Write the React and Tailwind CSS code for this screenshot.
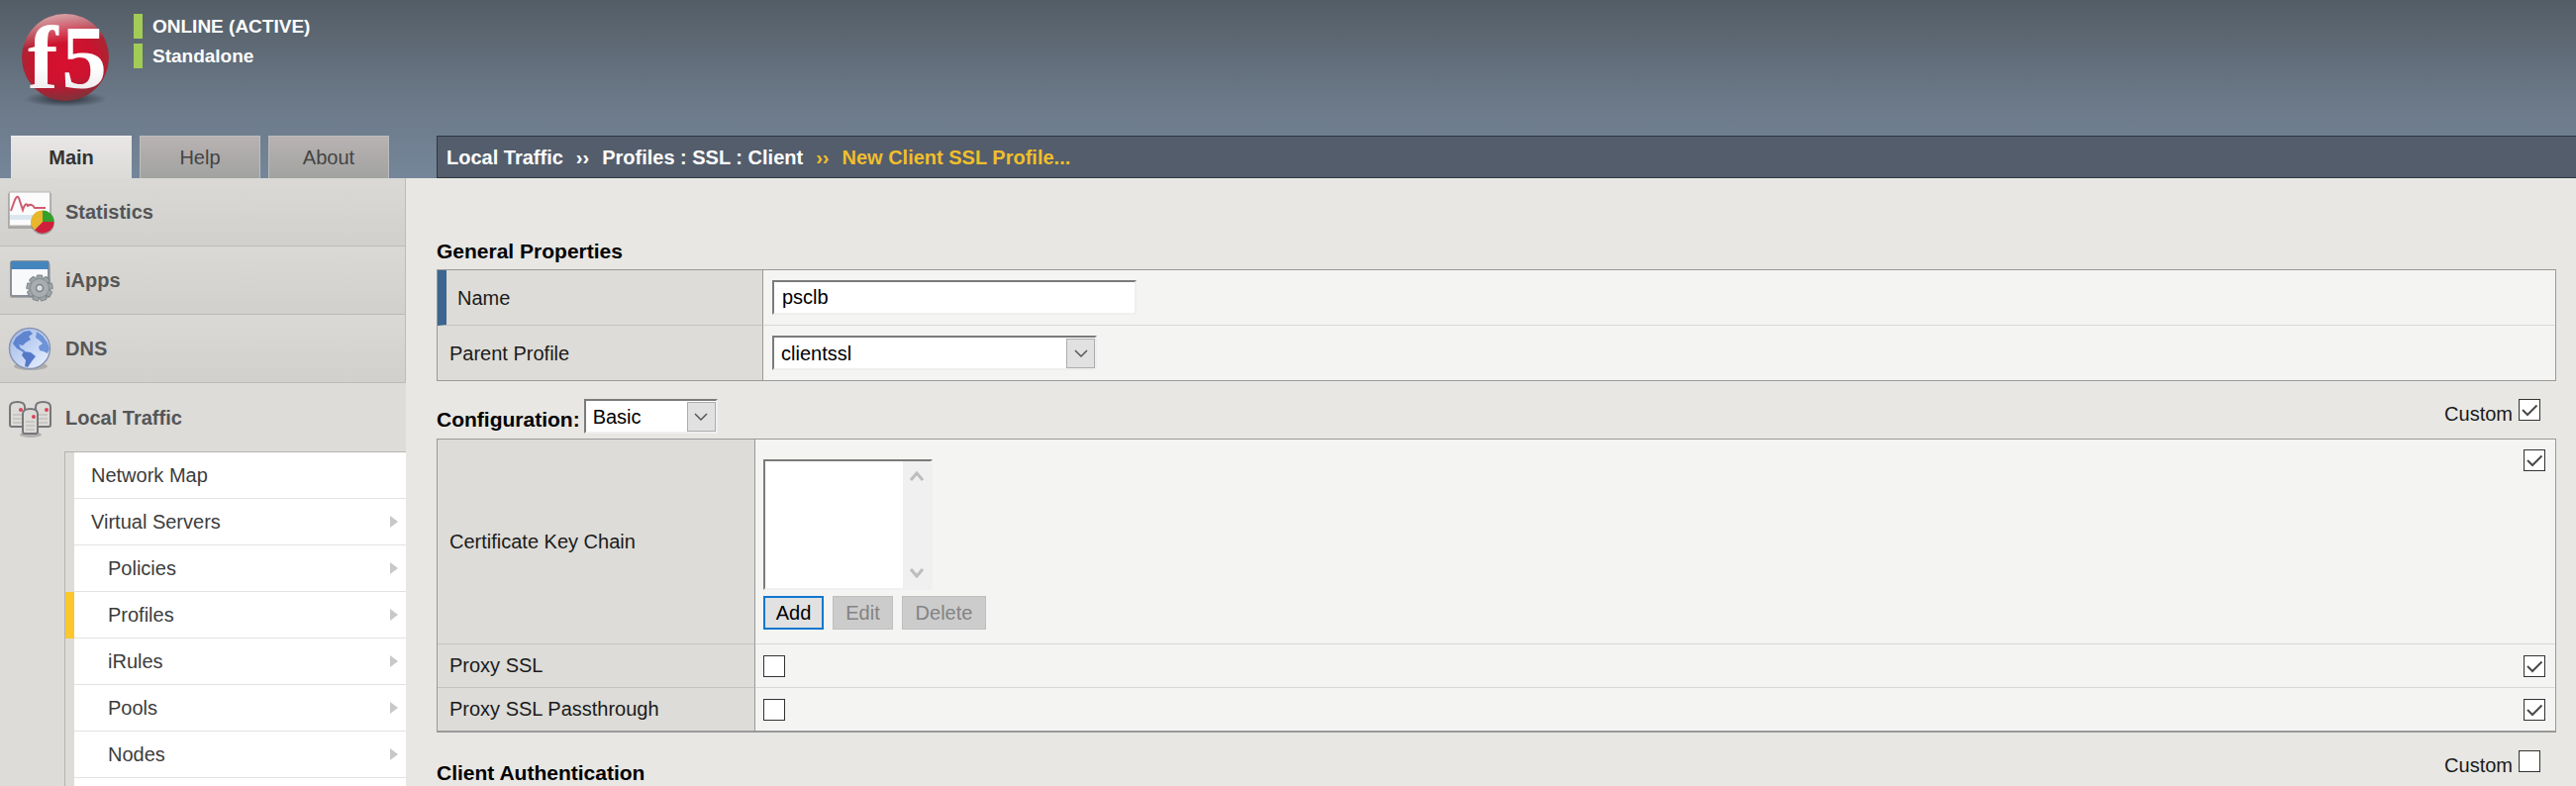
import { useState } from 'react'

const TABS = ['Main', 'Help', 'About']

const SUBMENU = [
  { label: 'Network Map' },
  { label: 'Virtual Servers', more: true },
  { label: 'Policies', more: true, nested: true },
  { label: 'Profiles', more: true, nested: true, active: true },
  { label: 'iRules', more: true, nested: true },
  { label: 'Pools', more: true, nested: true },
  { label: 'Nodes', more: true, nested: true },
]

function Logo() {
  return (
    <svg className="overflow-visible" width="100" height="100" viewBox="0 0 100 100" role="img" aria-label="f5">
      <defs>
        <radialGradient id="ball" cx="0.5" cy="0.55" r="0.55">
          <stop offset="0" stopColor="#d8102f" />
          <stop offset="0.65" stopColor="#c8142f" />
          <stop offset="1" stopColor="#a12a35" />
        </radialGradient>
        <linearGradient id="shine" x1="0.35" y1="0" x2="0.5" y2="1">
          <stop offset="0" stopColor="#fff" stopOpacity="0.6" />
          <stop offset="0.35" stopColor="#fff" stopOpacity="0" />
          <stop offset="0.75" stopColor="#5a4040" stopOpacity="0" />
          <stop offset="1" stopColor="#5a4040" stopOpacity="0.6" />
        </linearGradient>
        <radialGradient id="floor">
          <stop offset="0" stopColor="#1c242c" stopOpacity="0.9" />
          <stop offset="1" stopColor="#1c242c" stopOpacity="0" />
        </radialGradient>
        <linearGradient id="ink" x1="0" y1="0" x2="0" y2="1">
          <stop offset="0" stopColor="#fff" />
          <stop offset="0.6" stopColor="#fff" />
          <stop offset="1" stopColor="#e2dcdf" />
        </linearGradient>
      </defs>
      <ellipse cx="50" cy="86" rx="42" ry="8" fill="url(#floor)" />
      <circle cx="50" cy="44" r="44" fill="url(#ball)" />
      <circle cx="50" cy="44" r="44" fill="url(#shine)" />
      <text x="12" y="75" fontFamily="Liberation Serif, serif" fontWeight="700" fontSize="92" fill="url(#ink)">f</text>
      <text x="46" y="75" fontFamily="Liberation Serif, serif" fontWeight="700" fontSize="92" fill="url(#ink)">5</text>
    </svg>
  )
}

function StatisticsIcon() {
  return (
    <svg width="48" height="46" viewBox="0 0 48 46" aria-hidden="true">
      <rect x="0" y="4" width="44" height="36" rx="1" fill="#000" opacity="0.2" />
      <rect x="1.500" y="3" width="41" height="34" fill="#fbfbfb" stroke="#b5b5b5" />
      <path d="M2 26h40v5H2z" fill="#dbe7ef" />
      <path d="M3 22L7 11q3-7 5 1l3 9q3-9 5-4 4-3 7 2h11" fill="none" stroke="#cf5c70" strokeWidth="2" />
      <circle cx="35" cy="34" r="12" fill="#3a3a3a" opacity="0.35" />
      <path d="M35 33V21.500a11.500 11.500 0 0 1 11.500 11.500z" fill="#35a02b" />
      <path d="M35 33h11.500a11.500 11.500 0 0 1-19.500 8.300z" fill="#cf1f3c" />
      <path d="M35 33l-8 8.300a11.500 11.500 0 0 1 8-19.800z" fill="#e9b62c" />
    </svg>
  )
}

function AppsIcon() {
  return (
    <svg width="48" height="46" viewBox="0 0 48 46" aria-hidden="true">
      <rect x="2" y="6" width="41" height="35" rx="2" fill="#000" opacity="0.2" />
      <rect x="3" y="4" width="38" height="35" rx="2" fill="#f8f9fb" stroke="#8a9099" strokeWidth="2" />
      <path d="M3 4h38v8H3z" fill="#4585bd" />
      <g fill="#9da5a9" stroke="#7b8386" strokeWidth="1">
        {[0, 40, 80, 120, 160, 200, 240, 280, 320].map((a) => (
          <rect key={a} x="29" y="18" width="6" height="7" rx="1" transform={`rotate(${a} 32 31)`} />
        ))}
      </g>
      <circle cx="32" cy="31" r="9.500" fill="#a6aeb2" stroke="#868e92" />
      <circle cx="32" cy="31" r="3.500" fill="#dde1e3" stroke="#7b8386" strokeWidth="1.500" />
    </svg>
  )
}

function DnsIcon() {
  return (
    <svg width="48" height="46" viewBox="0 0 48 46" aria-hidden="true">
      <defs>
        <linearGradient id="sea" x1="0" y1="0" x2="1" y2="1">
          <stop offset="0" stopColor="#9fb6e4" />
          <stop offset="0.5" stopColor="#c3d4f4" />
          <stop offset="1" stopColor="#eef3fd" />
        </linearGradient>
      </defs>
      <ellipse cx="23" cy="41" rx="17" ry="4" fill="#000" opacity="0.18" />
      <circle cx="22" cy="23" r="20.500" fill="url(#sea)" stroke="#8794b4" strokeWidth="1.500" />
      <path d="M8 12l8-6 6-1 3 3-4 3 2 3-5 3-3 3-4-1 2 4 4 2-1 2-7-4-4-5z" fill="#5f85cf" />
      <path d="M16 26l7 1 5 4-4 5-4 6-3-1 1-6-4-5z" fill="#5579c8" />
      <path d="M29 6l6 4 5 7 2 6-2 5-4-2-4-1-1-4 4-3-3-3-4-3z" fill="#6f93d8" />
    </svg>
  )
}

function Server({ x, y }) {
  return (
    <g transform={`translate(${x} ${y})`}>
      <path d="M0 6q0-5 7.500-5T15 6v18q0 2-2 2H2q-2 0-2-2z" fill="#dcdbd8" stroke="#77767a" strokeWidth="2" />
      <path d="M3 14h9M3 18h9M3 22h9" stroke="#b4b3b0" />
      <circle cx="11" cy="9" r="2" fill="#d8455b" />
    </g>
  )
}

function TrafficIcon() {
  return (
    <svg width="48" height="46" viewBox="0 0 48 46" aria-hidden="true">
      <ellipse cx="23" cy="40" rx="11" ry="3" fill="#000" opacity="0.2" />
      <Server x={2} y={6} />
      <Server x={28} y={6} />
      <Server x={15} y={13} />
    </svg>
  )
}

const SECTIONS = [
  { label: 'Statistics', icon: StatisticsIcon },
  { label: 'iApps', icon: AppsIcon },
  { label: 'DNS', icon: DnsIcon },
]

function Check({ label, id, defaultChecked = false }) {
  return (
    <span className="relative block size-[22px] shrink-0">
      <input
        id={id}
        type="checkbox"
        aria-label={label}
        defaultChecked={defaultChecked}
        className="peer block size-[22px] appearance-none border border-[#333] bg-white"
      />
      <svg className="pointer-events-none absolute inset-0 hidden peer-checked:block" width="22" height="22" viewBox="0 0 22 22" fill="none" stroke="#4a4a4a" strokeWidth="2" aria-hidden="true">
        <path d="M4 11l5 5L18.500 6.500" />
      </svg>
    </span>
  )
}

function Dropdown({ id, label, options, className }) {
  return (
    <span className={`relative block h-[35px] ${className}`}>
      <select
        id={id}
        aria-label={label}
        className="block h-full w-full appearance-none border-2 border-t-[#7b7b7b] border-r-[#efefef] border-b-[#efefef] border-l-[#7b7b7b] bg-white pl-[7px] text-black"
      >
        {options.map((o) => <option key={o}>{o}</option>)}
      </select>
      <span className="pointer-events-none absolute top-[3px] right-[2px] bottom-[2px] flex w-[29px] items-center justify-center border border-[#adadad] bg-[#e1e1e1]">
        <svg width="14" height="9" viewBox="0 0 14 9" fill="none" stroke="#555" strokeWidth="1.500" aria-hidden="true">
          <path d="M1 1l6 6 6-6" />
        </svg>
      </span>
    </span>
  )
}

function CustomToggle({ id, defaultChecked }) {
  return (
    <div className="flex items-start gap-[6px] pr-4">
      <label htmlFor={id} className="pt-[3px] leading-6">Custom</label>
      <Check id={id} defaultChecked={defaultChecked} />
    </div>
  )
}

export default function App() {
  const [tab, setTab] = useState('Main')

  return (
    <div className="flex min-h-screen flex-col bg-[#e8e7e3] font-['Liberation_Sans',Arial,sans-serif] text-[20px] leading-6 text-[#1a1a1a]">
      <header className="bg-linear-to-b from-[#535d66] via-[#6b7887] via-55% to-[#75869a]">
        <div className="flex h-[137px] items-start gap-[19px] pt-[14px] pl-4">
          <Logo />
          <div className="flex flex-col gap-[5px] text-[19px] font-bold text-white">
            <p className="h-[25px] border-l-[9px] border-[#a2cc56] pl-[10px] leading-[25px]">ONLINE (ACTIVE)</p>
            <p className="h-[25px] border-l-[9px] border-[#a2cc56] pl-[10px] leading-[25px]">Standalone</p>
          </div>
        </div>
        <div className="flex h-[43px]">
          <div className="flex w-[410px] shrink-0 gap-2 pl-[11px]">
            {TABS.map((t) => (
              <button
                key={t}
                type="button"
                onClick={() => setTab(t)}
                className={t === tab
                  ? 'w-[122px] border-t border-[#f2f0f0] bg-linear-to-b from-[#e9e6e6] to-[#dcdbd7] font-bold text-[#333]'
                  : 'w-[122px] border border-b-0 border-[#bdbdbd] bg-linear-to-b from-[#b8b2b3] to-[#a1a3a0] text-[#444]'}
              >
                {t}
              </button>
            ))}
          </div>
          <nav aria-label="Breadcrumb" className="ml-[31px] flex flex-1 items-center gap-[13px] border border-r-0 border-[#2f3640] bg-[#545d6b] pl-[9px] font-bold text-white">
            <a href="#local-traffic">Local Traffic</a>
            <span>››</span>
            <a href="#profiles">Profiles : SSL : Client</a>
            <span className="text-[#f0bf2b]">››</span>
            <span className="text-[#f0bf2b]">New Client SSL Profile...</span>
          </nav>
        </div>
      </header>

      <div className="flex flex-1">
        <aside className="flex w-[410px] shrink-0 flex-col bg-[#dddcd9]">
          {SECTIONS.map(({ label, icon: Icon }) => (
            <a
              key={label}
              href={`#${label.toLowerCase()}`}
              className="flex h-[69px] items-center gap-[10px] border-r border-b border-[#bcbbb8] bg-linear-to-b from-[#dad9d6] to-[#d1d0cc] pl-2 font-bold text-[#555]"
            >
              <Icon />
              {label}
            </a>
          ))}
          <a href="#local-traffic" className="flex h-[69px] items-center gap-[10px] pl-2 font-bold text-[#555]">
            <TrafficIcon />
            Local Traffic
          </a>
          <ul className="ml-[65px] flex flex-1 flex-col border-t border-l border-[#b5b4b1] text-[#3c3c3c]">
            {SUBMENU.map((item) => (
              <li key={item.label} className={`border-l-[9px] ${item.active ? 'border-[#fac72d]' : 'border-[#dddcd9]'}`}>
                <a href="#menu" className={`flex h-[47px] items-center justify-between border-b border-[#e2e2e2] bg-white pr-2 ${item.nested ? 'pl-[34px]' : 'pl-[17px]'}`}>
                  {item.label}
                  {item.more && (
                    <svg width="8" height="12" viewBox="0 0 8 12" fill="#c8c8c8" aria-hidden="true">
                      <path d="M0 0l8 6-8 6z" />
                    </svg>
                  )}
                </a>
              </li>
            ))}
            <li className="flex flex-1 border-l-[9px] border-[#dddcd9] bg-white" />
          </ul>
        </aside>

        <main className="flex-1 pr-5 pl-[31px]">
          <h2 className="pt-[62px] pb-[6px] text-[21px] leading-6 font-bold text-black">General Properties</h2>
          <div className="border border-[#999] bg-[#f4f4f2]">
            <div className="flex h-14">
              <label htmlFor="name" className="flex w-[329px] items-center border-r border-b border-l-[9px] border-r-[#999] border-b-[#c4c3c0] border-l-[#3c6590] bg-[#dddcd8] pl-[11px]">Name</label>
              <div className="flex flex-1 items-center border-b border-[#d8d8d6] pl-[9px]">
                <input
                  id="name"
                  defaultValue="psclb"
                  className="h-[35px] w-[368px] border-2 border-t-[#7b7b7b] border-r-[#efefef] border-b-[#efefef] border-l-[#7b7b7b] bg-white pl-2 text-black"
                />
              </div>
            </div>
            <div className="flex h-[55px]">
              <label htmlFor="parent" className="flex w-[329px] items-center border-r border-[#999] bg-[#dddcd8] pl-3">Parent Profile</label>
              <div className="flex items-center pl-[9px]">
                <Dropdown id="parent" options={['clientssl']} className="w-[328px]" />
              </div>
            </div>
          </div>

          <div className="flex h-[58px] items-start justify-between pt-[18px]">
            <div className="flex gap-1">
              <h2 className="pt-[9px] text-[21px] leading-6 font-bold text-black">Configuration:</h2>
              <Dropdown label="Configuration" options={['Basic', 'Advanced']} className="w-[135px]" />
            </div>
            <CustomToggle id="custom-config" defaultChecked />
          </div>

          <div className="border border-b-2 border-[#999] bg-[#f4f4f2]">
            <div className="flex">
              <label htmlFor="chain" className="flex w-[321px] items-center border-r border-b border-r-[#999] border-b-[#c4c3c0] bg-[#dddcd8] pl-3">Certificate Key Chain</label>
              <div className="flex flex-1 justify-between border-b border-[#d8d8d6] pr-[10px] pl-2">
                <div className="pt-5 pb-[14px]">
                  <div className="relative h-[132px] w-[171px]">
                    <select
                      id="chain"
                      multiple
                      className="block h-full w-full appearance-none overflow-hidden border-2 border-t-[#7b7b7b] border-r-[#f0f0f0] border-b-[#f0f0f0] border-l-[#7b7b7b] bg-white"
                    />
                    <span className="pointer-events-none absolute top-[2px] right-[2px] bottom-[2px] flex w-7 flex-col items-center justify-between bg-[#f0f0f0] py-[10px]">
                      <svg width="14" height="10" viewBox="0 0 14 10" fill="none" stroke="#bdbdbd" strokeWidth="3" aria-hidden="true">
                        <path d="M1 9l6-7 6 7" />
                      </svg>
                      <svg width="14" height="10" viewBox="0 0 14 10" fill="none" stroke="#bdbdbd" strokeWidth="3" aria-hidden="true">
                        <path d="M1 1l6 7 6-7" />
                      </svg>
                    </span>
                  </div>
                  <div className="mt-[6px] flex gap-[9px]">
                    <button type="button" className="h-[34px] w-[61px] border-2 border-[#0f78cf] bg-[#e1e1e1] text-black">Add</button>
                    <button type="button" disabled className="h-[34px] w-[61px] border border-[#bfbfbf] bg-[#cccccc] text-[#838383]">Edit</button>
                    <button type="button" disabled className="h-[34px] w-[85px] border border-[#bfbfbf] bg-[#cccccc] text-[#838383]">Delete</button>
                  </div>
                </div>
                <div className="pt-[10px]">
                  <Check label="Custom Certificate Key Chain" defaultChecked />
                </div>
              </div>
            </div>
            <div className="flex h-11">
              <label htmlFor="proxy" className="flex w-[321px] items-center border-r border-b border-r-[#999] border-b-[#c4c3c0] bg-[#dddcd8] pb-px pl-3">Proxy SSL</label>
              <div className="flex flex-1 items-center justify-between border-b border-[#d8d8d6] pr-[10px] pl-2">
                <Check id="proxy" />
                <Check label="Custom Proxy SSL" defaultChecked />
              </div>
            </div>
            <div className="flex h-[43px]">
              <label htmlFor="passthrough" className="flex w-[321px] items-center border-r border-[#999] bg-[#dddcd8] pb-px pl-3">Proxy SSL Passthrough</label>
              <div className="flex flex-1 items-center justify-between pr-[10px] pl-2">
                <Check id="passthrough" />
                <Check label="Custom Proxy SSL Passthrough" defaultChecked />
              </div>
            </div>
          </div>

          <div className="flex items-start justify-between pt-[18px]">
            <h2 className="pt-[11px] text-[21px] leading-6 font-bold text-black">Client Authentication</h2>
            <CustomToggle id="custom-auth" />
          </div>
        </main>
      </div>
    </div>
  )
}
